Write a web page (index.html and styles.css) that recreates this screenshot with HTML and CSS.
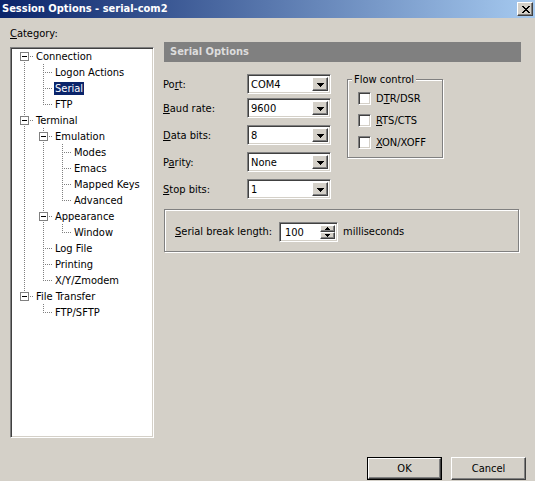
FILE: index.html
```html
<!DOCTYPE html>
<html lang="en">
<head>
<meta charset="utf-8">
<title>Session Options - serial-com2</title>
<link rel="stylesheet" href="styles.css">
</head>
<body>
<div class="window">
  <div class="titlebar">
    <span class="title">Session Options - serial-com2</span>
    <span class="close raised">
      <svg width="8" height="7" viewBox="0 0 8 7" shape-rendering="crispEdges">
        <g fill="#000">
          <rect x="0" y="0" width="2" height="1"/><rect x="6" y="0" width="2" height="1"/>
          <rect x="1" y="1" width="2" height="1"/><rect x="5" y="1" width="2" height="1"/>
          <rect x="2" y="2" width="4" height="1"/>
          <rect x="3" y="3" width="2" height="1"/>
          <rect x="2" y="4" width="4" height="1"/>
          <rect x="1" y="5" width="2" height="1"/><rect x="5" y="5" width="2" height="1"/>
          <rect x="0" y="6" width="2" height="1"/><rect x="6" y="6" width="2" height="1"/>
        </g>
      </svg>
    </span>
  </div>

  <div class="client">
    <div class="main">
      <div class="left">
        <div class="cat-label"><u>C</u>ategory:</div>
        <div class="tree sunken">
          <div class="node"><span class="g r"><i class="exp"></i></span><span class="lbl">Connection</span></div>
          <div class="node"><span class="g v"></span><span class="g t"></span><span class="lbl">Logon Actions</span></div>
          <div class="node"><span class="g v"></span><span class="g t"></span><span class="lbl sel">Serial</span></div>
          <div class="node"><span class="g v"></span><span class="g l"></span><span class="lbl">FTP</span></div>
          <div class="node"><span class="g t"><i class="exp"></i></span><span class="lbl">Terminal</span></div>
          <div class="node"><span class="g v"></span><span class="g t"><i class="exp"></i></span><span class="lbl">Emulation</span></div>
          <div class="node"><span class="g v"></span><span class="g v"></span><span class="g t"></span><span class="lbl">Modes</span></div>
          <div class="node"><span class="g v"></span><span class="g v"></span><span class="g t"></span><span class="lbl">Emacs</span></div>
          <div class="node"><span class="g v"></span><span class="g v"></span><span class="g t"></span><span class="lbl">Mapped Keys</span></div>
          <div class="node"><span class="g v"></span><span class="g v"></span><span class="g l"></span><span class="lbl">Advanced</span></div>
          <div class="node"><span class="g v"></span><span class="g t"><i class="exp"></i></span><span class="lbl">Appearance</span></div>
          <div class="node"><span class="g v"></span><span class="g v"></span><span class="g l"></span><span class="lbl">Window</span></div>
          <div class="node"><span class="g v"></span><span class="g t"></span><span class="lbl">Log File</span></div>
          <div class="node"><span class="g v"></span><span class="g t"></span><span class="lbl">Printing</span></div>
          <div class="node"><span class="g v"></span><span class="g l"></span><span class="lbl">X/Y/Zmodem</span></div>
          <div class="node"><span class="g l"><i class="exp"></i></span><span class="lbl">File Transfer</span></div>
          <div class="node"><span class="g"></span><span class="g l"></span><span class="lbl">FTP/SFTP</span></div>
        </div>
      </div>

      <div class="page">
        <div class="page-header">Serial Options</div>
        <div class="settings">
          <div class="fields">
            <div class="field first">
              <span class="flabel">Po<u>r</u>t:</span>
              <div class="combo sunken"><span class="value">COM4</span><span class="drop raised"><svg width="7" height="4" viewBox="0 0 7 4" shape-rendering="crispEdges"><g fill="#000"><rect x="0" y="0" width="7" height="1"/><rect x="1" y="1" width="5" height="1"/><rect x="2" y="2" width="3" height="1"/><rect x="3" y="3" width="1" height="1"/></g></svg></span></div>
            </div>
            <div class="field">
              <span class="flabel"><u>B</u>aud rate:</span>
              <div class="combo sunken"><span class="value">9600</span><span class="drop raised"><svg width="7" height="4" viewBox="0 0 7 4" shape-rendering="crispEdges"><g fill="#000"><rect x="0" y="0" width="7" height="1"/><rect x="1" y="1" width="5" height="1"/><rect x="2" y="2" width="3" height="1"/><rect x="3" y="3" width="1" height="1"/></g></svg></span></div>
            </div>
            <div class="field">
              <span class="flabel"><u>D</u>ata bits:</span>
              <div class="combo sunken"><span class="value">8</span><span class="drop raised"><svg width="7" height="4" viewBox="0 0 7 4" shape-rendering="crispEdges"><g fill="#000"><rect x="0" y="0" width="7" height="1"/><rect x="1" y="1" width="5" height="1"/><rect x="2" y="2" width="3" height="1"/><rect x="3" y="3" width="1" height="1"/></g></svg></span></div>
            </div>
            <div class="field">
              <span class="flabel">P<u>a</u>rity:</span>
              <div class="combo sunken"><span class="value">None</span><span class="drop raised"><svg width="7" height="4" viewBox="0 0 7 4" shape-rendering="crispEdges"><g fill="#000"><rect x="0" y="0" width="7" height="1"/><rect x="1" y="1" width="5" height="1"/><rect x="2" y="2" width="3" height="1"/><rect x="3" y="3" width="1" height="1"/></g></svg></span></div>
            </div>
            <div class="field">
              <span class="flabel"><u>S</u>top bits:</span>
              <div class="combo sunken"><span class="value">1</span><span class="drop raised"><svg width="7" height="4" viewBox="0 0 7 4" shape-rendering="crispEdges"><g fill="#000"><rect x="0" y="0" width="7" height="1"/><rect x="1" y="1" width="5" height="1"/><rect x="2" y="2" width="3" height="1"/><rect x="3" y="3" width="1" height="1"/></g></svg></span></div>
            </div>
          </div>

          <fieldset class="group flow">
            <legend>Flow control</legend>
            <div class="check"><span class="cbox sunken"></span><span>D<u>T</u>R/DSR</span></div>
            <div class="check"><span class="cbox sunken"></span><span><u>R</u>TS/CTS</span></div>
            <div class="check"><span class="cbox sunken"></span><span><u>X</u>ON/XOFF</span></div>
          </fieldset>
        </div>

        <div class="group brk">
          <span class="blabel"><u>S</u>erial break length:</span>
          <div class="spin sunken">
            <span class="value">100</span>
            <span class="arrows">
              <span class="sbtn raised"><svg width="5" height="3" viewBox="0 0 5 3" shape-rendering="crispEdges"><g fill="#000"><rect x="2" y="0" width="1" height="1"/><rect x="1" y="1" width="3" height="1"/><rect x="0" y="2" width="5" height="1"/></g></svg></span>
              <span class="sbtn raised"><svg width="5" height="3" viewBox="0 0 5 3" shape-rendering="crispEdges"><g fill="#000"><rect x="0" y="0" width="5" height="1"/><rect x="1" y="1" width="3" height="1"/><rect x="2" y="2" width="1" height="1"/></g></svg></span>
            </span>
          </div>
          <span class="unit">milliseconds</span>
        </div>
      </div>
    </div>

    <div class="buttons">
      <span class="btn default"><span class="btn-face raised">OK</span></span>
      <span class="btn raised">Cancel</span>
    </div>
  </div>
</div>
</body>
</html>
```

FILE: styles.css
```css
* { box-sizing: border-box; }

html, body { margin: 0; padding: 0; }

body {
  width: 535px;
  height: 481px;
  overflow: hidden;
  background: #d4d0c8;
  font-family: "DejaVu Sans Condensed", "DejaVu Sans", sans-serif;
  font-size: 11px;
  color: #000;
}

u { text-decoration: underline; text-underline-offset: 1px; }

/* 3D edges used by the classic controls */
.raised {
  border: 1px solid;
  border-color: #fff #404040 #404040 #fff;
  box-shadow: inset -1px -1px 0 #808080, inset 1px 1px 0 #d4d0c8;
  background: #d4d0c8;
}

.sunken {
  border: 1px solid;
  border-color: #808080 #fff #fff #808080;
  box-shadow: inset 1px 1px 0 #404040, inset -1px -1px 0 #d4d0c8;
  background: #fff;
}

.window {
  width: 535px;
  height: 481px;
  display: flex;
  flex-direction: column;
}

/* caption */
.titlebar {
  flex: none;
  height: 18px;
  display: flex;
  align-items: center;
  justify-content: space-between;
  padding: 0 2px 0 2px;
  background: linear-gradient(to right, #0a246a, #a6caf0);
}

.title {
  color: #fff;
  font-weight: bold;
  line-height: 18px;
}

.close {
  width: 16px;
  height: 14px;
  display: flex;
  align-items: center;
  justify-content: center;
  padding-left: 1px;
}

.close svg { display: block; }

/* dialog body */
.client {
  flex: 1;
  display: flex;
  flex-direction: column;
  padding: 9px 0 0 10px;
}

.main {
  display: flex;
  align-items: flex-start;
}

.left {
  width: 144px;
  flex: none;
}

.cat-label {
  line-height: 13px;
  height: 13px;
  margin-bottom: 7px;
}

/* category tree */
.tree {
  height: 391px;
  border-width: 1px;
  padding: 0 0 0 4px;
}

.node {
  display: flex;
  align-items: center;
  height: 16px;
}

.g {
  position: relative;
  width: 19px;
  height: 16px;
  flex: none;
}

.g.v::before,
.g.t::before,
.g.l::before,
.g.r::before {
  content: "";
  position: absolute;
  left: 9px;
  width: 1px;
  background: repeating-linear-gradient(to bottom, #808080 0 1px, transparent 1px 2px);
}

.g.v::before, .g.t::before { top: 0; height: 16px; }
.g.l::before { top: 0; height: 9px; }
.g.r::before { top: 8px; height: 8px; }

.g.t::after,
.g.l::after,
.g.r::after {
  content: "";
  position: absolute;
  left: 10px;
  top: 8px;
  width: 9px;
  height: 1px;
  background: repeating-linear-gradient(to right, transparent 0 1px, #808080 1px 2px);
}

.exp {
  position: absolute;
  left: 5px;
  top: 4px;
  width: 9px;
  height: 9px;
  border: 1px solid #808080;
  background: #fff;
  z-index: 1;
}

.exp::before {
  content: "";
  position: absolute;
  left: 1px;
  top: 3px;
  width: 5px;
  height: 1px;
  background: #000;
}

.lbl {
  margin-left: 1px;
  padding: 0 1px;
  line-height: 13px;
  height: 13px;
  white-space: nowrap;
}

.lbl.sel {
  background: #0a246a;
  color: #fff;
}

/* property page */
.page {
  width: 358px;
  margin: 15px 0 0 9px;
}

.page-header {
  height: 20px;
  line-height: 20px;
  padding-left: 6px;
  margin-left: 1px;
  background: #808080;
  color: #dcdcdc;
  font-weight: bold;
}

.settings {
  display: flex;
  align-items: flex-start;
}

.fields {
  display: grid;
  row-gap: 7px;
  margin-top: 12px;
}

.field {
  display: flex;
  align-items: center;
  height: 20px;
}

.field.first { margin-bottom: -3px; }

.flabel {
  width: 84px;
  line-height: 13px;
}

.combo {
  width: 84px;
  height: 20px;
  display: flex;
  align-items: stretch;
  padding: 2px;
}

.combo .value {
  flex: 1;
  padding-left: 1px;
  line-height: 16px;
}

.drop {
  width: 16px;
  display: flex;
  align-items: center;
  justify-content: center;
  padding-top: 1px;
}

.drop svg, .sbtn svg { display: block; }

/* group boxes */
.group {
  border: 1px solid #808080;
  box-shadow: inset 1px 1px 0 #fff, 1px 1px 0 #fff;
}

fieldset.flow {
  min-width: 0;
  width: 96px;
  margin: 11px 0 0 16px;
  padding: 6px 0 8px 10px;
}

.flow legend {
  padding: 0 2px;
  margin-left: -6px;
  line-height: 13px;
  background: #d4d0c8;
}

.check {
  display: flex;
  align-items: center;
  height: 13px;
}

.check + .check { margin-top: 9px; }

.cbox {
  width: 13px;
  height: 13px;
  flex: none;
  margin-right: 5px;
}

.brk {
  width: 355px;
  height: 43px;
  margin: 10px 0 0 1px;
  display: flex;
  align-items: center;
  padding: 2px 0 0 10px;
}

.blabel {
  width: 104px;
}

.spin {
  width: 59px;
  height: 20px;
  display: flex;
  padding: 2px;
}

.spin .value {
  flex: 1;
  padding-left: 3px;
  line-height: 16px;
}

.arrows {
  width: 15px;
  display: flex;
  flex-direction: column;
}

.sbtn {
  flex: 1;
  display: flex;
  align-items: center;
  justify-content: center;
}

.unit {
  margin-left: 5px;
}

/* dialog buttons */
.buttons {
  display: flex;
  justify-content: flex-end;
  gap: 9px;
  margin-top: 19px;
  padding-right: 9px;
}

.btn {
  width: 75px;
  height: 23px;
  display: flex;
  align-items: center;
  justify-content: center;
}

.btn.default {
  border: 1px solid #000;
}

.btn-face {
  width: 100%;
  height: 100%;
  display: flex;
  align-items: center;
  justify-content: center;
}
```
